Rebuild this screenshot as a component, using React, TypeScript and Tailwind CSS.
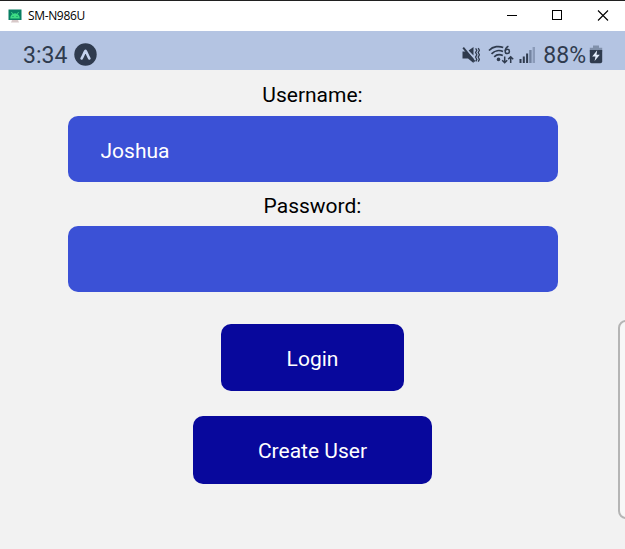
import React from "react";

const ink = "#2f3b4e";

function AndroidIcon() {
  return (
    <svg width="14" height="14" viewBox="0 0 14 14" className="shrink-0">
      <rect x="0.5" y="0.5" width="13" height="10.5" fill="#087f63" />
      <path d="M2.2 9.500a4.800 5.200 0 0 1 9.600 0z" fill="#3ddc84" />
      <path d="M3.400 3l1.400 2.200M10.600 3l-1.400 2.200" stroke="#3ddc84" strokeWidth="0.9" />
      <circle cx="5" cy="7.500" r="0.6" fill="#087f63" />
      <circle cx="9" cy="7.500" r="0.6" fill="#087f63" />
      <path d="M4 11h6l1 2.500H3z" fill="#d8c9c9" />
    </svg>
  );
}

function ExpoIcon() {
  return (
    <svg width="23" height="23" viewBox="0 0 23 23" className="shrink-0">
      <circle cx="11.5" cy="11.5" r="11.2" fill={ink} />
      <path d="M7.600 15.400C9.200 13.200 10 9.800 11.500 7.800c1.500 2 2.300 5.400 3.900 7.600" fill="none" stroke="#c3d2ee" strokeWidth="2.600" strokeLinecap="round" strokeLinejoin="round" />
    </svg>
  );
}

function MuteIcon() {
  return (
    <svg width="18" height="18" viewBox="0 0 18 18" className="shrink-0" fill="none">
      <path d="M0.500 5.500h4l7 7V17l-5.500-4.500H0.500z" fill={ink} />
      <path d="M6.600 4.400L11.500 1v8.600z" fill={ink} />
      <path d="M1.200 1.600L12.600 15.600" stroke={ink} strokeWidth="1.900" />
      <path d="M13.600 2.400l1.200 1.800-1.200 2.300 1.200 2.300-1.200 2.300 1.200 2.300-1 2M16.200 2.200l1.200 2-1.200 2.300 1.200 2.300-1.200 2.300 1.200 2.300-1.200 2.200" stroke={ink} strokeWidth="1.300" />
    </svg>
  );
}

function WifiIcon() {
  return (
    <svg width="26" height="20" viewBox="0 0 26 20" className="shrink-0" fill="none" stroke={ink}>
      <path d="M1 5.500C5.200 1 11.500 0.800 15.200 2.600" strokeWidth="1.700" />
      <path d="M3.500 8.800C6.800 5.400 11.500 4.800 15 6.500" strokeWidth="1.700" />
      <path d="M6.200 11.800C8.600 9.500 12 9.200 14.800 10.600" strokeWidth="1.700" />
      <circle cx="10.500" cy="14.400" r="1.800" fill={ink} stroke="none" />
      <path d="M20.400 1.200C18.200 2.400 17.300 4 17.300 6" strokeWidth="1.500" />
      <circle cx="19.300" cy="6.400" r="2.100" strokeWidth="1.500" />
      <path d="M16.700 11.500v6M14.200 15.200l2.500 2.500 2.500-2.500M22.700 18v-6.500M20.200 14.200l2.500-2.500L25.200 14.200" strokeWidth="1.500" />
    </svg>
  );
}

function SignalIcon() {
  return (
    <svg width="17" height="18" viewBox="0 0 17 18" className="shrink-0" fill={ink}>
      <rect x="0.500" y="13" width="2" height="4" />
      <rect x="3.800" y="10.500" width="2" height="6.500" />
      <rect x="7.100" y="7.500" width="2" height="9.500" />
      <rect x="10.200" y="4" width="2.400" height="13" fill="#7383a0" />
      <rect x="13.600" y="1" width="2.400" height="16" fill="#8b9bb9" />
    </svg>
  );
}

function BatteryIcon() {
  return (
    <svg width="14" height="19" viewBox="0 0 14 19" className="shrink-0">
      <path d="M4 0.500h6v2.300h3.200v4H0.800v-4H4z" fill="#8090aa" />
      <path d="M0.800 5h12.400v11.500a1.800 1.800 0 0 1-1.800 1.800H2.600a1.800 1.800 0 0 1-1.800-1.800z" fill={ink} />
      <path d="M8.200 5.200L3.200 11.500h3.300L5.600 16l5.200-6.200H7.500z" fill="#e4edfb" />
    </svg>
  );
}

export default function App() {
  return (
    <div className="relative flex h-[549px] w-[625px] flex-col overflow-hidden bg-[#f2f2f2] font-['Roboto',sans-serif]">
      <header className="flex h-[31px] shrink-0 items-center border-t border-[#202020] bg-white pl-2 text-black">
        <AndroidIcon />
        <span className="ml-[6px] font-['Open_Sans',sans-serif] text-[12px] tracking-[-0.35px]">SM-N986U</span>
        <svg width="104" height="12" viewBox="0 0 104 12" className="mr-[15px] ml-auto" fill="none" stroke="#000" shapeRendering="crispEdges">
          <path d="M1 5.500h10" />
          <rect x="46.500" y="0.500" width="9" height="9" />
          <path d="M92 0.500l10 10M102 0.500l-10 10" shapeRendering="auto" strokeWidth="1.100" />
        </svg>
      </header>

      <div className="flex h-[39px] shrink-0 items-center bg-[#b4c4e2] pt-[8px] pr-[22px] pl-[23px] text-[#2f3b4e]">
        <span className="pt-px text-[23px] leading-none">3:34</span>
        <span className="ml-[7px]"><ExpoIcon /></span>
        <div className="ml-auto flex items-center">
          <MuteIcon />
          <span className="ml-2"><WifiIcon /></span>
          <span className="ml-[5px]"><SignalIcon /></span>
          <span className="ml-[7px] pt-px text-[23px] leading-none">88%</span>
          <span className="ml-[3px]"><BatteryIcon /></span>
        </div>
      </div>

      <main className="flex flex-col items-center text-[21px] leading-6 text-black">
        <label htmlFor="username" className="mt-[13px]">Username:</label>
        <input id="username" defaultValue="Joshua" className="mt-[9px] h-[66px] w-[490px] rounded-[10px] bg-[#3b51d6] px-[33px] pt-[3px] text-white outline-none" />
        <label htmlFor="password" className="mt-[12px]">Password:</label>
        <input id="password" type="password" className="mt-[8px] h-[66px] w-[490px] rounded-[10px] bg-[#3b51d6] px-[33px] outline-none" />
        <button className="mt-[32px] h-[67px] w-[183px] rounded-[10px] bg-[#08089c] pt-[2px] text-white">Login</button>
        <button className="mt-[25px] h-[68px] w-[239px] rounded-[10px] bg-[#08089c] pt-[2px] text-white">Create User</button>
      </main>

      <div className="absolute top-[320px] left-[618px] h-[199px] w-[20px] rounded-[8px] border-2 border-[#b5b5b5] bg-[#f7f7f7]" />
    </div>
  );
}
